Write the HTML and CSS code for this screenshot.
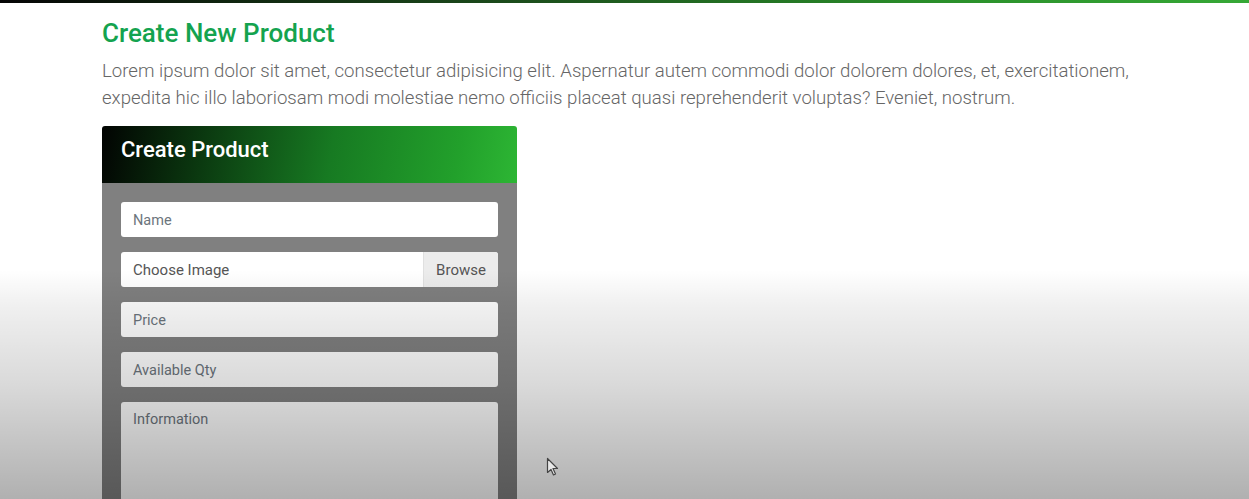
FILE: index.html
```html
<!DOCTYPE html>
<html lang="en">
<head>
<meta charset="utf-8">
<title>Create New Product</title>
<link rel="stylesheet" href="styles.css">
</head>
<body>
<div class="topbar"></div>
<main class="page">
  <h1 class="title">Create New Product</h1>
  <p class="lead">Lorem ipsum dolor sit amet, consectetur adipisicing elit. Aspernatur autem commodi dolor dolorem dolores, et, exercitationem, expedita hic illo laboriosam modi molestiae nemo officiis placeat quasi reprehenderit voluptas? Eveniet, nostrum.</p>
  <section class="card">
    <header class="card-header">Create Product</header>
    <form class="card-body">
      <input class="field" type="text" placeholder="Name">
      <div class="file">
        <span class="file-label">Choose Image</span>
        <span class="file-btn">Browse</span>
      </div>
      <input class="field" type="text" placeholder="Price">
      <input class="field" type="text" placeholder="Available Qty">
      <textarea class="field area" placeholder="Information"></textarea>
    </form>
  </section>
</main>
<div class="shade"></div>
<svg class="cursor" width="14" height="20" viewBox="0 0 14 20"><path d="M1.5 1.5 L1.5 15.5 L5 12.5 L7.5 18 L9.5 17 L7 11.5 L11.5 11.5 Z" fill="#e8e8e8" stroke="#444" stroke-width="1.2" stroke-linejoin="round"/></svg>
</body>
</html>
```

FILE: styles.css
```css
html, body {
  margin: 0;
  padding: 0;
  height: 100%;
  overflow: hidden;
}
body {
  background: #fff;
  font-family: Roboto, "Liberation Sans", sans-serif;
  position: relative;
}
.topbar {
  height: 3px;
  background: linear-gradient(to right, #050505 0%, #1b4a1b 40%, #2a8f2a 75%, #36a836 100%);
}
.page {
  padding: 0 60px 0 102px;
}
.title {
  margin: 15px 0 0;
  font-size: 26px;
  font-weight: 500;
  line-height: 30px;
  color: #14a34f;
}
.lead {
  margin: 10px 0 0;
  font-size: 18.6px;
  line-height: 27px;
  font-weight: 300;
  color: #666;
  max-width: 1045px;
}
.card {
  margin-top: 14px;
  width: 415px;
  border-radius: 3px 3px 0 0;
  overflow: hidden;
}
.card-header {
  height: 57px;
  box-sizing: border-box;
  padding: 11px 19px 0;
  font-size: 22px;
  font-weight: 500;
  color: #fff;
  background: linear-gradient(100deg, #020302 0%, #0b3a10 25%, #177a22 55%, #22a02b 85%, #2db634 100%);
}
.card-body {
  background: #808080;
  padding: 19px 19px 40px;
  display: flex;
  flex-direction: column;
  gap: 15px;
  margin: 0;
}
.field {
  display: block;
  box-sizing: border-box;
  width: 100%;
  height: 35px;
  border: none;
  border-radius: 3px;
  background: #fff;
  padding: 1px 12px 0;
  font-family: Roboto, "Liberation Sans", sans-serif;
  font-size: 14.5px;
  color: #555;
  outline: none;
}
.field::placeholder {
  color: #6c757d;
}
.area {
  height: 110px;
  padding-top: 9px;
  resize: none;
}
.file {
  display: flex;
  height: 35px;
  border-radius: 3px;
  overflow: hidden;
  background: #fff;
  font-size: 15px;
}
.file-label {
  flex: 1;
  display: flex;
  align-items: center;
  padding: 1px 12px 0;
  color: #555;
}
.file-btn {
  width: 74px;
  display: flex;
  align-items: center;
  justify-content: center;
  padding-top: 1px;
  background: #ececec;
  border-left: 1px solid #e0e0e0;
  color: #555;
}
.shade {
  position: absolute;
  left: 0;
  right: 0;
  top: 0;
  height: 499px;
  pointer-events: none;
  background: linear-gradient(to bottom, rgba(0,0,0,0) 0px, rgba(0,0,0,0) 270px, rgba(0,0,0,0.06) 305px, rgba(0,0,0,0.15) 385px, rgba(0,0,0,0.31) 499px);
}
.cursor {
  position: absolute;
  left: 546px;
  top: 457px;
}
```
